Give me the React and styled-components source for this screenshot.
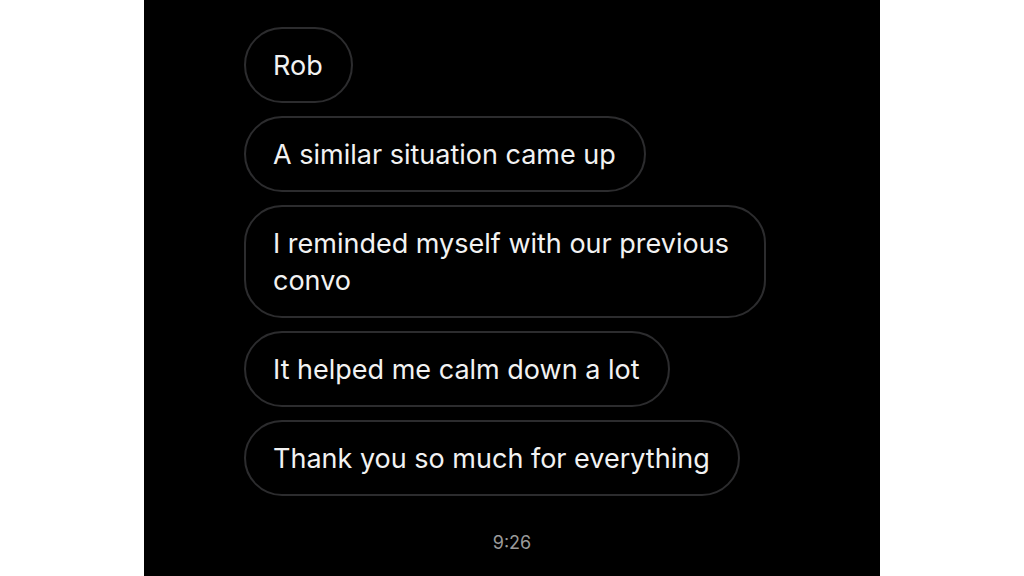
import React from 'react';
import styled, { createGlobalStyle } from 'styled-components';

const Global = createGlobalStyle`
  html, body {
    margin: 0;
    background: #ffffff;
    height: 100%;
  }
  body {
    font-family: Inter, "Noto Sans", sans-serif;
    -webkit-font-smoothing: antialiased;
  }
`;

const Page = styled.div`
  width: 1024px;
  height: 576px;
  display: flex;
  justify-content: center;
  background: #ffffff;
`;

const Screen = styled.div`
  width: 736px;
  height: 576px;
  background: #000000;
  box-sizing: border-box;
  padding: 27px 0 0 100px;
  display: flex;
  flex-direction: column;
  overflow: hidden;
`;

const Thread = styled.div`
  display: flex;
  flex-direction: column;
  align-items: flex-start;
  gap: 13px;
`;

const Bubble = styled.div`
  box-sizing: border-box;
  max-width: 522px;
  padding: 17.5px 28px 17.5px 27px;
  border: 2px solid #2c2c2e;
  border-radius: 38px;
  background: #000000;
  color: #f2f2f2;
  font-size: 27px;
  line-height: 37px;
`;

const Time = styled.div`
  margin-top: 37px;
  margin-left: -100px;
  text-align: center;
  color: #9a9a9a;
  font-size: 18px;
  line-height: 20px;
`;

const messages = [
  'Rob',
  'A similar situation came up',
  'I reminded myself with our previous convo',
  'It helped me calm down a lot',
  'Thank you so much for everything',
];

export default function App() {
  return (
    <>
      <Global />
      <Page>
        <Screen>
          <Thread>
            {messages.map((m) => (
              <Bubble key={m}>{m}</Bubble>
            ))}
          </Thread>
          <Time>9:26</Time>
        </Screen>
      </Page>
    </>
  );
}
